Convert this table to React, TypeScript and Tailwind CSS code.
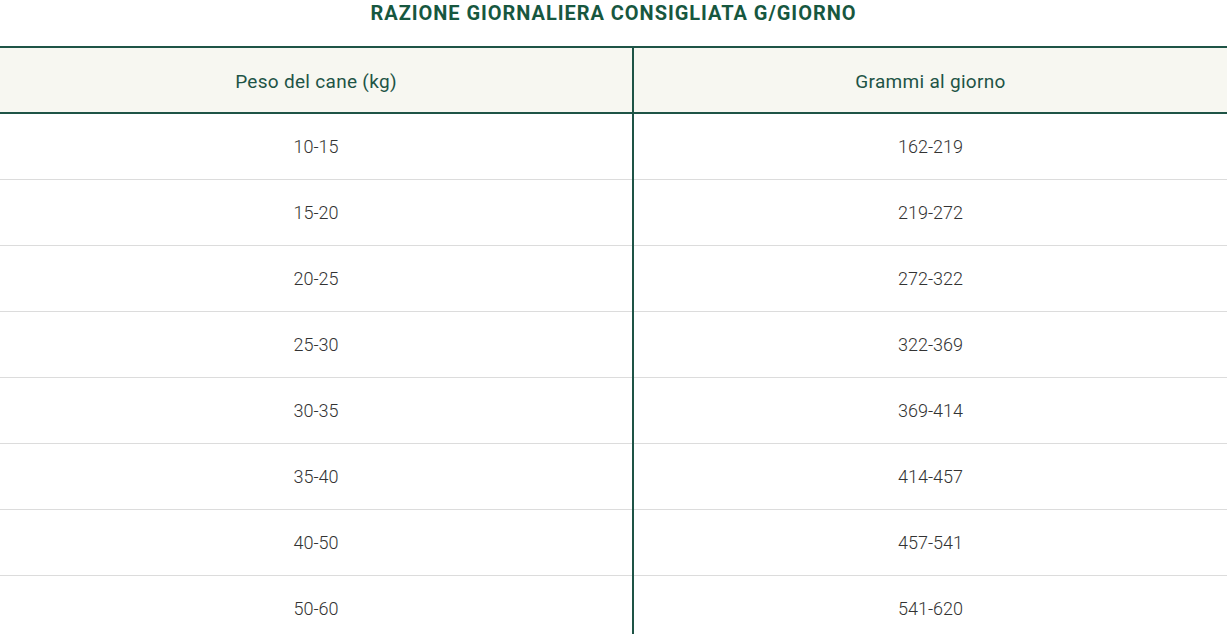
import React from "react";

const rows: [string, string][] = [
  ["10-15", "162-219"],
  ["15-20", "219-272"],
  ["20-25", "272-322"],
  ["25-30", "322-369"],
  ["30-35", "369-414"],
  ["35-40", "414-457"],
  ["40-50", "457-541"],
  ["50-60", "541-620"],
];

export default function App() {
  return (
    <div className="w-[1227px] h-[634px] overflow-hidden bg-white" style={{ fontFamily: "Roboto, 'Liberation Sans', sans-serif" }}>
      <h2 className="h-[46px] pt-[1px] text-center text-[20px] font-bold leading-[24px] tracking-[0.95px] text-[#17573f]">
        RAZIONE GIORNALIERA CONSIGLIATA G/GIORNO
      </h2>
      <table className="w-full border-collapse table-fixed">
        <thead>
          <tr className="bg-[#f7f7f1] border-t-[2px] border-b-[2px] border-[#1e5446]">
            <th className="w-[633px] h-[66px] pt-[4px] border-r-[2px] border-[#1e5446] text-center text-[19px] font-normal tracking-[0.3px] text-[#1e5446]">
              Peso del cane (kg)
            </th>
            <th className="h-[66px] pt-[4px] text-center text-[19px] font-normal tracking-[0.3px] text-[#1e5446]">Grammi al giorno</th>
          </tr>
        </thead>
        <tbody>
          {rows.map(([kg, g]) => (
            <tr key={kg} className="border-b border-[#dcdcdc]">
              <td className="h-[66px] pt-[1px] border-r-[2px] border-r-[#1e5446] text-center text-[18px] font-light text-[#333]">
                {kg}
              </td>
              <td className="h-[66px] pt-[1px] text-center text-[18px] font-light text-[#333]">{g}</td>
            </tr>
          ))}
        </tbody>
      </table>
    </div>
  );
}
